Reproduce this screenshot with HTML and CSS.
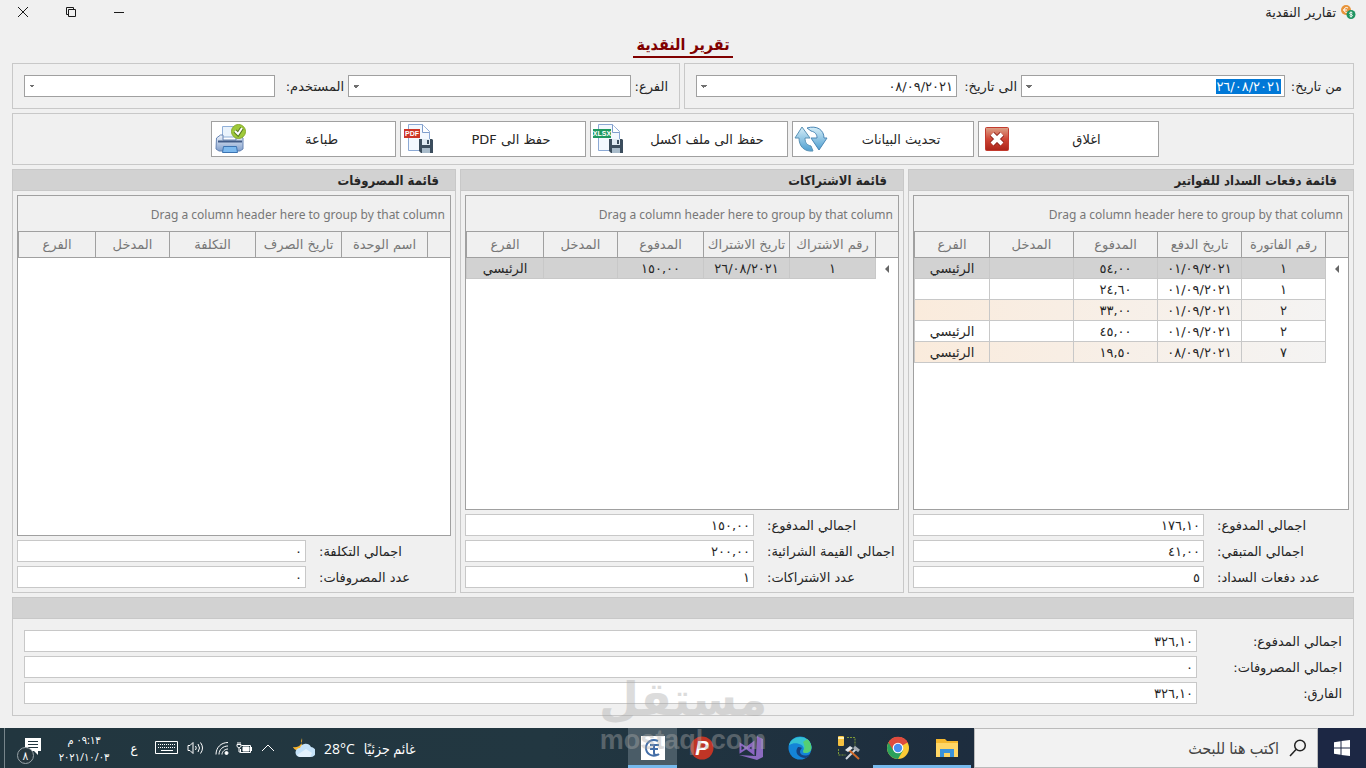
FILE: index.html
```html
<!DOCTYPE html>
<html lang="ar" dir="rtl">
<head>
  <meta charset="UTF-8">
  <meta name="viewport" content="width=device-width, initial-scale=1.0">
  <title>تقارير النقدية</title>
  <link rel="stylesheet" href="styles.css">
</head>
<body>
  <header class="titlebar">
    <svg class="app-icon" width="16" height="16" viewBox="0 0 16 16">
      <circle cx="6" cy="6" r="5" fill="#e8943a"/>
      <path d="M8 4a2.500 2.500 0 1 0 0 4M3 6h4" fill="none" stroke="#fff" stroke-width="1"/>
      <circle cx="11" cy="10.500" r="4.500" fill="#1f9461"/>
      <path d="M12.500 9c-1-1-3-.8-3 .4s3 .8 3 2-2 1.400-3 .4M11 7.500v6" fill="none" stroke="#fff" stroke-width=".9"/>
    </svg>
    <span class="window-title">تقارير النقدية</span>
    <div class="window-buttons">
      <button type="button" aria-label="تصغير"><svg width="12" height="12" viewBox="0 0 12 12"><path d="M1 6.500h10"/></svg></button>
      <button type="button" aria-label="استعادة"><svg width="12" height="12" viewBox="0 0 12 12"><path d="M3.500 3.500h7v7h-7zM3.500 8.500h-2v-7h7v2"/></svg></button>
      <button type="button" aria-label="اغلاق النافذة"><svg width="12" height="12" viewBox="0 0 12 12"><path d="M1 1l10 10M11 1L1 11"/></svg></button>
    </div>
  </header>

  <main class="page">
    <h1><span>تقرير النقدية</span></h1>

    <form class="filters">
      <div class="box filter-box dates">
        <label for="fromDate">من تاريخ:</label>
        <div class="combo">
          <input type="text" id="fromDate" value="٢٦/٠٨/٢٠٢١">
          <button type="button" class="arrow" aria-label="اختيار من تاريخ"></button>
        </div>
        <label for="toDate">الى تاريخ:</label>
        <div class="combo">
          <input type="text" id="toDate" value="٠٨/٠٩/٢٠٢١">
          <button type="button" class="arrow" aria-label="اختيار الى تاريخ"></button>
        </div>
      </div>
      <div class="box filter-box places">
        <label for="branch">الفرع:</label>
        <select id="branch"><option></option></select>
        <label for="user">المستخدم:</label>
        <select id="user"><option></option></select>
      </div>
    </form>

    <div class="box toolbar">
      <button type="button">
        <span>اغلاق</span>
        <svg width="36" height="34" viewBox="0 0 36 34">
          <defs><linearGradient id="red" x1="0" y1="0" x2="0" y2="1"><stop offset="0" stop-color="#dba288"/><stop offset=".5" stop-color="#cf4636"/><stop offset="1" stop-color="#ab2318"/></linearGradient></defs>
          <rect x="6.500" y="5.500" width="23" height="23" rx="1" fill="url(#red)" stroke="#c33a2e"/>
          <path d="M13 12l10 10M23 12L13 22" stroke="#8c231b" stroke-width="6"/>
          <path d="M13 12l10 10M23 12L13 22" stroke="#fff" stroke-width="4"/>
        </svg>
      </button>
      <button type="button">
        <span>تحديث البيانات</span>
        <svg width="36" height="34" viewBox="0 0 36 34">
          <defs><linearGradient id="blue" x1="0" y1="0" x2="0" y2="1"><stop offset="0" stop-color="#d6eef8"/><stop offset="1" stop-color="#4f9fd0"/></linearGradient></defs>
          <path d="M20 29C11 30 6 24 6 16H2L9 5l8 11h-5c0 5 2 7 6 8z" fill="url(#blue)" stroke="#5a92b5"/>
          <path d="M14 6c10-3 17 2 17 10h3l-8 12-8-12h6c0-4-2-6-6-7z" fill="url(#blue)" stroke="#4a86b5"/>
        </svg>
      </button>
      <button type="button">
        <span>حفظ الى ملف اكسل</span>
        <svg width="36" height="34" viewBox="0 0 36 34">
          <path d="M7.500 2.500h14l7 7v19h-21z" fill="#f3f8fe" stroke="#8ca9d4"/>
          <path d="M21.500 2.500v8h7" fill="#fff" stroke="#7e9dcb"/>
          <rect x="2" y="7" width="18" height="9" fill="#1f9960"/>
          <text x="11" y="14" class="file-type">XLSX</text>
          <path d="M18 17h13l1 1v13H20l-2-2z" fill="#3b4d5d"/>
          <path d="M21 17h8v6h-8z" fill="#dfeaf2"/><path d="M26 18h2v4h-2z" fill="#3b4d5d"/><path d="M21 26h8v5h-8z" fill="#a9bccb"/>
        </svg>
      </button>
      <button type="button">
        <span>حفظ الى PDF</span>
        <svg width="36" height="34" viewBox="0 0 36 34">
          <path d="M7.500 2.500h14l7 7v19h-21z" fill="#f3f8fe" stroke="#8ca9d4"/>
          <path d="M21.500 2.500v8h7" fill="#fff" stroke="#7e9dcb"/>
          <rect x="3" y="7" width="16" height="9" fill="#cd3527"/>
          <text x="11" y="14" class="file-type">PDF</text>
          <path d="M18 17h13l1 1v13H20l-2-2z" fill="#3b4d5d"/>
          <path d="M21 17h8v6h-8z" fill="#dfeaf2"/><path d="M26 18h2v4h-2z" fill="#3b4d5d"/><path d="M21 26h8v5h-8z" fill="#a9bccb"/>
        </svg>
      </button>
      <button type="button">
        <span>طباعة</span>
        <svg width="36" height="34" viewBox="0 0 36 34">
          <defs><linearGradient id="body" x1="0" y1="0" x2="0" y2="1"><stop offset="0" stop-color="#f2f6fc"/><stop offset="1" stop-color="#809ecb"/></linearGradient></defs>
          <path d="M10.500 15V4.500h14V15z" fill="#eaf3fc" stroke="#91b0d8"/>
          <path d="M4.500 16l4-3H11v5h13v-5h3l4 3v11l-3 2H7l-3-2z" fill="url(#body)" stroke="#6684b3"/>
          <path d="M6 19.500h24" stroke="#405a86" stroke-width="2"/>
          <path d="M11.500 24.500h13l1 6h-15z" fill="#7db9ee" stroke="#3c74b2"/>
          <circle cx="26.500" cy="9.500" r="7" fill="#9fca3b" stroke="#86aa2a"/>
          <path d="M23 9l3 3 4-6" fill="none" stroke="#577922" stroke-width="4"/>
          <path d="M23 9l3 3 4-6" fill="none" stroke="#fff" stroke-width="2"/>
        </svg>
      </button>
    </div>

    <div class="panels">
      <section class="panel">
        <h2>قائمة دفعات السداد للفواتير</h2>
        <div class="panel-body">
          <div class="grid-view">
            <p class="group-hint" dir="ltr">Drag a column header here to group by that column</p>
            <table>
              <colgroup><col class="mark"><col class="wide"><col class="wide"><col class="wide"><col class="wide"><col></colgroup>
              <thead>
                <tr><th></th><th>رقم الفاتورة</th><th>تاريخ الدفع</th><th>المدفوع</th><th>المدخل</th><th>الفرع</th></tr>
              </thead>
              <tbody>
                <tr class="selected"><td class="current"></td><td>١</td><td>٠١/٠٩/٢٠٢١</td><td>٥٤,٠٠</td><td></td><td>الرئيسي</td></tr>
                <tr><td></td><td>١</td><td>٠١/٠٩/٢٠٢١</td><td>٢٤,٦٠</td><td></td><td></td></tr>
                <tr class="tinted"><td></td><td>٢</td><td>٠١/٠٩/٢٠٢١</td><td>٣٣,٠٠</td><td></td><td></td></tr>
                <tr><td></td><td>٢</td><td>٠١/٠٩/٢٠٢١</td><td>٤٥,٠٠</td><td></td><td>الرئيسي</td></tr>
                <tr class="tinted"><td></td><td>٧</td><td>٠٨/٠٩/٢٠٢١</td><td>١٩,٥٠</td><td></td><td>الرئيسي</td></tr>
              </tbody>
            </table>
          </div>
          <div class="totals">
            <label for="paidTotal">اجمالي المدفوع:</label>
            <input type="text" id="paidTotal" value="١٧٦,١٠" readonly>
            <label for="restTotal">اجمالي المتبقي:</label>
            <input type="text" id="restTotal" value="٤١,٠٠" readonly>
            <label for="payCount">عدد دفعات السداد:</label>
            <input type="text" id="payCount" value="٥" readonly>
          </div>
        </div>
      </section>

      <section class="panel">
        <h2>قائمة الاشتراكات</h2>
        <div class="panel-body">
          <div class="grid-view">
            <p class="group-hint" dir="ltr">Drag a column header here to group by that column</p>
            <table>
              <colgroup><col class="mark"><col class="wider"><col class="wider"><col class="wider"><col class="narrow"><col></colgroup>
              <thead>
                <tr><th></th><th>رقم الاشتراك</th><th>تاريخ الاشتراك</th><th>المدفوع</th><th>المدخل</th><th>الفرع</th></tr>
              </thead>
              <tbody>
                <tr class="selected"><td class="current"></td><td>١</td><td>٢٦/٠٨/٢٠٢١</td><td>١٥٠,٠٠</td><td></td><td>الرئيسي</td></tr>
              </tbody>
            </table>
          </div>
          <div class="totals">
            <label for="subPaid">اجمالي المدفوع:</label>
            <input type="text" id="subPaid" value="١٥٠,٠٠" readonly>
            <label for="subValue">اجمالي القيمة الشرائية:</label>
            <input type="text" id="subValue" value="٢٠٠,٠٠" readonly>
            <label for="subCount">عدد الاشتراكات:</label>
            <input type="text" id="subCount" value="١" readonly>
          </div>
        </div>
      </section>

      <section class="panel">
        <h2>قائمة المصروفات</h2>
        <div class="panel-body">
          <div class="grid-view">
            <p class="group-hint" dir="ltr">Drag a column header here to group by that column</p>
            <table>
              <colgroup><col class="mark"><col class="wider"><col class="wider"><col class="wider"><col class="narrow"><col></colgroup>
              <thead>
                <tr><th></th><th>اسم الوحدة</th><th>تاريخ الصرف</th><th>التكلفة</th><th>المدخل</th><th>الفرع</th></tr>
              </thead>
            </table>
          </div>
          <div class="totals">
            <label for="costTotal">اجمالي التكلفة:</label>
            <input type="text" id="costTotal" value="٠" readonly>
            <label for="costCount">عدد المصروفات:</label>
            <input type="text" id="costCount" value="٠" readonly>
          </div>
        </div>
      </section>
    </div>

    <section class="panel">
      <h2></h2>
      <div class="totals grand">
        <label for="allPaid">اجمالي المدفوع:</label>
        <input type="text" id="allPaid" value="٣٢٦,١٠" readonly>
        <label for="allCost">اجمالي المصروفات:</label>
        <input type="text" id="allCost" value="٠" readonly>
        <label for="allDiff">الفارق:</label>
        <input type="text" id="allDiff" value="٣٢٦,١٠" readonly>
      </div>
    </section>
  </main>

  <footer class="taskbar">
    <button type="button" class="start" aria-label="ابدأ">
      <svg width="16" height="16" viewBox="0 0 16 16"><path d="M0 2.300L6.500 1.300v6.200H0zM7.500 1.100L16 0v7.500H7.500zM0 8.500h6.500v6.200L0 13.700zM7.500 8.500H16V16l-8.500-1.100z" fill="#fff"/></svg>
    </button>
    <label class="search">
      <svg width="18" height="18" viewBox="0 0 18 18"><circle cx="11" cy="6.500" r="5.300"/><path d="M7 10.500L1 17"/></svg>
      <input type="text" placeholder="اكتب هنا للبحث" aria-label="بحث">
    </label>
    <div class="apps">
      <button type="button" class="open" aria-label="مستكشف الملفات">
        <svg width="24" height="24" viewBox="0 0 24 24"><path d="M1 3h9l2 2h11v16H1z" fill="#f5b82e"/><path d="M1 7h22v14H1z" fill="#ffd666"/><path d="M5 21v-8h14v8h-4v-4h-6v4z" fill="#3b93dc"/></svg>
      </button>
      <button type="button" class="open" aria-label="Chrome">
        <svg width="24" height="24" viewBox="0 0 24 24"><circle cx="12" cy="12" r="11" fill="#fbca35"/><path d="M2.500 6.500A11 11 0 0 1 21.500 6.500L12 12z" fill="#df4b3f"/><path d="M2.500 6.500A11 11 0 0 0 12 23l5-8.500L12 12z" fill="#2ba15c"/><path d="M12 7h10a11 11 0 0 0-19.500-.5L7 14z" fill="#df4b3f"/><circle cx="12" cy="12" r="5.300" fill="#fff"/><circle cx="12" cy="12" r="4.200" fill="#4a8df0"/></svg>
      </button>
      <button type="button" aria-label="الادوات">
        <svg width="24" height="24" viewBox="0 0 24 24"><rect x="1" y="0" width="6" height="10" rx="1" fill="#f5c140"/><path d="M1 1h6v2H1z" fill="#fff0b0"/><path d="M10 1.500h8v8M1.500 13v6h7" fill="none" stroke="#7d9937" stroke-dasharray="2 1"/><path d="M9 23l10-10" stroke="#cfd6dc" stroke-width="2"/><path d="M17 11l5 4" stroke="#a4acb3" stroke-width="3"/><path d="M12 14l10 9" stroke="#d06a2a" stroke-width="2"/><path d="M8 14l5-4 3 2-5 4z" fill="#e2e6e9"/></svg>
      </button>
      <button type="button" aria-label="Edge">
        <svg width="24" height="24" viewBox="0 0 24 24"><circle cx="12" cy="12" r="11.500" fill="#1484d7"/><path d="M1 9C4-2 22-2 23.500 11c0 4-3 6-6 6-2 0-3-1-2-3 2-5-8-9-14-5z" fill="#35c1d3"/><path d="M19 3c4 3 5 8 4 11-2 3-5 3-7 3l-1-2c3-3 1-7 0-9z" fill="#55cf73"/><path d="M10 11c-4 5 0 11 8 11 2-1 3-2 4-4-5 3-10 1-10-2 0-2 1-3 2-4-1-1-3-1-4-1z" fill="#15427f"/></svg>
      </button>
      <button type="button" aria-label="Visual Studio">
        <svg width="24" height="24" viewBox="0 0 24 24"><path d="M18 0l6 3v18l-6 3L0 19l17 1z" fill="#8b6bc0"/><path d="M1.500 8l6 4-6 4z" fill="none" stroke="#8b66c2" stroke-width="2"/><path d="M14 7.500v9L8 12z" fill="none" stroke="#8b66c2" stroke-width="3"/></svg>
      </button>
      <button type="button" aria-label="P">
        <svg width="24" height="24" viewBox="0 0 24 24"><circle cx="12" cy="12" r="11.500" fill="#c03526"/><text x="12" y="19" class="p-mark">P</text></svg>
      </button>
      <button type="button" class="open active" aria-label="تقارير النقدية">
        <svg width="24" height="24" viewBox="0 0 24 24"><path d="M0 0h24v24H0z" fill="#fff"/><path d="M17 5C11 2 5 6 5 12s6 9 11 7M9 9h9M13 9v8c0 3 4 2 5 1M9 13h8" fill="none" stroke="#426da7" stroke-width="2"/></svg>
      </button>
    </div>
    <div class="weather">
      <span>غائم جزئيًا</span>
      <span dir="ltr">28°C</span>
      <svg width="22" height="20" viewBox="0 0 22 20"><path d="M9 0a8 8 0 0 0 4 11l-5 2C3 13 1 11 0 9c6 1 10-3 9-9z" fill="#f8b32d"/><path d="M7 19a4.500 4.500 0 0 1 0-9 6 6 0 0 1 11-1 5 5 0 0 1-.5 10z" fill="#c5e2f8"/><path d="M4 17l9-6 6 4-2 4H7z" fill="#e4f1fb"/></svg>
    </div>
    <div class="tray">
      <button type="button" class="tray-more" aria-label="المزيد"><svg width="14" height="8" viewBox="0 0 14 8"><path d="M1 7l6-6 6 6"/></svg></button>
      <span class="tray-battery"><svg width="16" height="12" viewBox="0 0 16 12"><path d="M5.500 3.500h9v7h-10V7M1 2.500h4v2L3 6 1 4.500zM2 0v2M4 0v2M3 6v4h2M15.500 5v4"/><path d="M7 5h6v4H7z" fill="#fff"/></svg></span>
      <span class="tray-wifi"><svg width="14" height="14" viewBox="0 0 14 14"><path d="M1 13.500C1 6.500 6 1.500 13 1.500M4 13.500c0-5 4-8.500 9-8.500M7 13.500c0-3 3-5.500 6-5.500"/><circle cx="11.500" cy="12" r="1.500" fill="#fff"/></svg></span>
      <span class="tray-sound"><svg width="17" height="14" viewBox="0 0 17 14"><path d="M1 4.500h2l3-3v11l-3-3H1zM8.500 5q1.500 2 0 4M11 3q3 4 0 8M13.500 1.500q4 5.500 0 11"/></svg></span>
      <span class="tray-keyboard"><svg width="24" height="14" viewBox="0 0 24 14"><path d="M.5.500h22v12H.5z"/><path d="M3 3.500h18M3 6.500h18" stroke-dasharray="1 1"/><path d="M6 9.500h12"/></svg></span>
      <span class="tray-lang">ع</span>
      <time class="clock" datetime="2021-10-03T21:13"><span>٠٩:١٣ م</span><span>٢٠٢١/١٠/٠٣</span></time>
      <button type="button" class="notices" aria-label="الاشعارات">
        <svg width="24" height="24" viewBox="0 0 24 24"><path d="M7 2h16v13h-3v4l-4-4H7z" fill="#fff"/><path d="M10 5.500h10M10 8.500h10M10 11.500h10" stroke="#22363f"/></svg>
        <span class="badge">٨</span>
      </button>
      <span class="show-desktop"></span>
    </div>
  </footer>

  <div class="watermark">
    <span class="watermark-name">مستقل</span>
    <span class="watermark-site" dir="ltr">mostaql.com</span>
  </div>

  <script>
    // the form opens with the first date ready to be typed over
    const fromDate = document.getElementById('fromDate');
    fromDate.focus();
    fromDate.select();
  </script>
</body>
</html>
```

FILE: styles.css
```css
* {
  box-sizing: border-box;
}

body {
  margin: 0;
  min-height: 100vh;
  display: flex;
  flex-direction: column;
  position: relative;
  background-color: #f0f0f0;
  color: #262626;
  font-family: 'DejaVu Sans', sans-serif;
  font-size: 13px;
  line-height: 17px;
}

button,
input,
select {
  font: inherit;
  color: inherit;
}

button {
  padding: 0;
  border: none;
  background: none;
}

svg {
  display: block;
  flex: none;
}

/* title bar */
.titlebar {
  display: flex;
  align-items: center;
  height: 24px;
  padding-right: 10px;
}

.window-title {
  margin-right: 4px;
}

.window-buttons {
  display: flex;
  margin-right: auto;
}

.window-buttons button {
  width: 48px;
  height: 24px;
  padding-right: 2px;
  display: flex;
  justify-content: center;
  align-items: center;
}

.window-buttons path {
  fill: none;
  stroke: #1a1a1a;
}

.page {
  flex: 1;
  display: flex;
  flex-direction: column;
  gap: 4px;
  padding: 0 12px 12px;
}

h1 {
  margin: 0;
  height: 35px;
  padding-top: 10px;
  text-align: center;
  font-family: 'DejaVu Sans Condensed', 'DejaVu Sans', sans-serif;
  font-size: 16px;
  line-height: 22px;
  color: #800000;
}

h1 span {
  display: inline-block;
  padding: 0 3px;
  border-bottom: 2px solid #800000;
}

.box {
  border: 1px solid #c8c8c8;
}

/* filters */
.filters {
  display: grid;
  grid-template-columns: 670fr 668fr;
  gap: 4px;
}

.filter-box {
  display: grid;
  align-items: center;
  gap: 4px;
  padding: 11px;
}

.dates {
  grid-template-columns: 53px 264fr 56px 261fr;
}

.places {
  grid-template-columns: 33px 283fr 65px 251fr;
}

label {
  white-space: nowrap;
}

.combo,
select {
  height: 22px;
  width: 100%;
  background-color: #fff;
  border: 1px solid #a0a0a0;
}

.combo {
  display: flex;
}

.combo input {
  flex: 1;
  min-width: 0;
  height: 20px;
  padding: 0 3px;
  border: none;
  outline: none;
  background: none;
}

.combo input::selection {
  background-color: #0078d7;
  color: #fff;
}

.arrow {
  width: 16px;
}

.arrow,
select {
  appearance: none;
  border-radius: 0;
  background-image: linear-gradient(45deg, transparent 50%, #707070 50%), linear-gradient(-45deg, transparent 50%, #707070 50%);
  background-position: 4px 9px, 7px 9px;
  background-size: 3px 3px;
  background-repeat: no-repeat;
}

/* toolbar */
.toolbar {
  display: grid;
  grid-template-columns: 181fr 182fr 198fr 186fr 185fr;
  gap: 4px;
  padding: 7px 194px 7px 198px;
}

.toolbar button {
  display: flex;
  align-items: center;
  height: 36px;
  background-color: #fff;
  border: 1px solid #a0a0a0;
}

.toolbar span {
  flex: 1;
  text-align: center;
}

.file-type {
  font-family: 'Liberation Sans', sans-serif;
  font-size: 7px;
  font-weight: bold;
  fill: #fff;
  text-anchor: middle;
}

/* panels */
.panels {
  flex: 1;
  display: grid;
  grid-template-columns: 446fr 444fr 444fr;
  gap: 4px;
}

.panel {
  display: flex;
  flex-direction: column;
  min-width: 0;
  border: 1px solid #c8c8c8;
}

h2 {
  margin: 0;
  height: 21px;
  padding: 2px 16px;
  background-color: #d2d2d2;
  border-bottom: 1px solid #c8c8c8;
  font-family: 'DejaVu Sans Condensed', 'DejaVu Sans', sans-serif;
  font-size: 13px;
  line-height: 17px;
}

.panel-body {
  flex: 1;
  display: flex;
  flex-direction: column;
  gap: 4px;
  padding: 4px;
}

.grid-view {
  flex: 1;
  background-color: #fff;
  border: 1px solid #a0a0a0;
}

.group-hint {
  margin: 0;
  padding: 10px 5px 8px;
  background-color: #f0f0f0;
  color: #777;
  font-family: 'Noto Sans', 'DejaVu Sans', sans-serif;
  font-size: 12px;
  text-align: right;
}

table {
  width: 100%;
  table-layout: fixed;
  border-collapse: separate;
  border-spacing: 0;
}

.mark {
  width: 23px;
}

.wide {
  width: 84px;
}

.wider {
  width: 86px;
}

.narrow {
  width: 74px;
}

th {
  height: 27px;
  padding: 0;
  background-color: #f0f0f0;
  border: 1px solid #a0a0a0;
  border-width: 1px 0 1px 1px;
  color: #777;
  font-weight: normal;
  white-space: nowrap;
}

td {
  height: 21px;
  padding: 0;
  border: 1px solid #c8c8c8;
  border-width: 0 0 1px 1px;
  text-align: center;
}

td:first-child {
  background-color: #fff;
  border-bottom: none;
}

.current::before {
  content: '';
  display: block;
  width: 4px;
  margin: 0 9px;
  border: 4px solid transparent;
  border-left: none;
  border-right-color: #666;
}

.selected {
  background-color: #d2d2d2;
}

.tinted {
  background-image: linear-gradient(to left, #f4f4f4, #faebdc);
}

.totals {
  display: grid;
  grid-template-columns: 132px 1fr;
  align-items: center;
  gap: 4px 13px;
}

.totals label {
  text-align: left;
}

.totals input {
  width: 100%;
  height: 22px;
  padding: 0 3px;
  background-color: #fff;
  border: 1px solid #c8c8c8;
}

.totals.grand {
  padding: 11px;
}

.grand label {
  text-align: right;
}

/* taskbar */
.taskbar {
  display: flex;
  height: 40px;
  background: linear-gradient(to left, #1c2744, #1d2d3e 30%, #223741 60%, #22363f);
  color: #fff;
  font-family: 'Open Sans', 'DejaVu Sans Condensed', sans-serif;
}

.start {
  width: 48px;
  display: flex;
  justify-content: center;
  align-items: center;
  background-color: #1c2744;
}

.search {
  width: 344px;
  display: flex;
  align-items: center;
  gap: 8px;
  padding: 0 10px;
  background-color: #f2f2f2;
  border: 1px solid #bbb;
}

.search circle,
.search path {
  fill: none;
  stroke: #222;
  stroke-width: 1.5;
}

.search input {
  flex: 1;
  min-width: 0;
  border: none;
  background: none;
  font-size: 16px;
}

.search input::placeholder {
  color: #444;
}

.apps {
  display: flex;
  padding-right: 3px;
}

.apps button {
  width: 49px;
  display: flex;
  justify-content: center;
  align-items: center;
  border-top: 3px solid transparent;
  border-bottom: 3px solid transparent;
}

.apps .open {
  border-bottom-color: #76b9ed;
}

.apps .active {
  background-color: #4a5c67;
  border-top-color: #4a5c67;
}

.p-mark {
  font-family: 'Liberation Sans', sans-serif;
  font-size: 20px;
  font-weight: bold;
  font-style: italic;
  fill: #fff;
  text-anchor: middle;
}

.weather {
  display: flex;
  align-items: center;
  gap: 9px;
  margin-right: auto;
  margin-left: 11px;
  font-size: 14px;
}

.tray {
  display: flex;
}

.tray > * {
  display: flex;
  justify-content: center;
  align-items: center;
}

.tray svg {
  fill: none;
  stroke: #fff;
}

.tray-more {
  width: 28px;
}

.tray-battery {
  width: 20px;
}

.tray-wifi {
  width: 24px;
}

.tray-sound {
  width: 30px;
}

.tray-keyboard {
  width: 26px;
}

.tray-lang {
  width: 40px;
}

.tray .clock {
  width: 60px;
  flex-direction: column;
  font-size: 11px;
}

.notices {
  position: relative;
  width: 49px;
}

.notices svg {
  stroke: none;
}

.badge {
  position: absolute;
  left: 12px;
  bottom: 4px;
  width: 17px;
  height: 17px;
  background-color: #26363e;
  border: 1px solid #9aa5aa;
  border-radius: 50%;
  font-size: 12px;
  line-height: 15px;
}

.show-desktop {
  width: 5px;
  border-right: 1px solid #77858b;
}

/* site mark over the page */
.watermark {
  position: absolute;
  left: 0;
  right: 0;
  bottom: 14px;
  display: flex;
  flex-direction: column;
  align-items: center;
  color: #aaa;
  opacity: 0.4;
  font-weight: bold;
  pointer-events: none;
}

.watermark-name {
  font-family: 'DejaVu Sans', sans-serif;
  font-size: 46px;
  line-height: 54px;
}

.watermark-site {
  font-family: 'Liberation Sans', sans-serif;
  font-size: 27px;
  line-height: 28px;
}
```
